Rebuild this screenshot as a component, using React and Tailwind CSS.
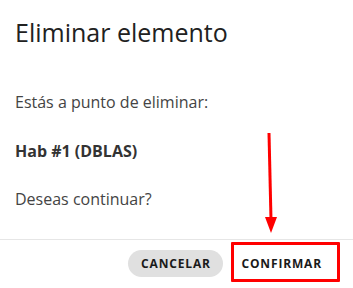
export default function App() {
  return (
    <div className="relative w-[353px] h-[288px] bg-white overflow-hidden font-['Open_Sans',sans-serif]">
      <h2 className="px-[15px] pt-[16px] text-[25px] leading-[32px] text-[#212121] font-normal">
        Eliminar elemento
      </h2>
      <div className="px-[15px] pt-[42px] text-[16px] leading-[24px] text-[#444]">
        <p>Estás a punto de eliminar:</p>
        <p className="mt-[25px] font-bold text-[#333]">Hab #1 (DBLAS)</p>
        <p className="mt-[24px]">Deseas continuar?</p>
      </div>
      <div className="mt-[28px] h-px bg-[#e6e6e6]" />
      <div className="flex justify-end items-center pt-[10px] pr-[21px] gap-[8px]">
        <button className="h-[27px] w-[95px] rounded-full bg-[#e0e0e0] text-[12px] font-bold tracking-[0.07em] text-[#1a1a1a] flex items-center justify-center">
          CANCELAR
        </button>
        <button className="h-[27px] px-[10px] text-[12px] font-bold tracking-[0.07em] text-[#1a1a1a] flex items-center justify-center">
          CONFIRMAR
        </button>
      </div>
      <div className="absolute left-[231px] top-[242px] w-[109px] h-[40px] border-[3px] border-[#ff0000] rounded-[1px]" />
      <svg className="absolute left-[260px] top-[128px]" width="24" height="110" viewBox="0 0 24 110">
        <line x1="9" y1="5" x2="11" y2="92" stroke="#ff0000" strokeWidth="3" />
        <polygon points="5,89 17,89 11,105" fill="#ff0000" />
      </svg>
    </div>
  );
}
